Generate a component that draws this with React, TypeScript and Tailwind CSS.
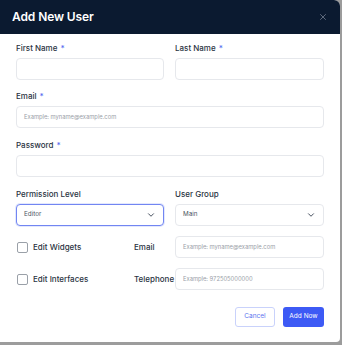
import { ChevronDown, X } from 'lucide-react'

function Label({ text, required }: { text: string; required?: boolean }) {
  return (
    <div className="h-[12px] text-[8px] leading-[12px] font-medium text-[#2a3342] mb-[4px]">
      {text}
      {required && <span className="text-[#4f6bf0] ml-[3px]">*</span>}
    </div>
  )
}

function Input({ placeholder }: { placeholder?: string }) {
  return (
    <div className="h-[22px] rounded-[4px] border border-[#e6e8ec] bg-white flex items-center px-[7px] text-[5.8px] text-[#9aa0a8]">
      {placeholder}
    </div>
  )
}

function Select({ value, active }: { value: string; active?: boolean }) {
  return (
    <div
      className={`h-[22px] rounded-[4px] border flex items-center justify-between px-[7px] text-[6.3px] text-[#4b5563] bg-white ${
        active ? 'border-[#7286f2] ring-1 ring-[#e3e8fd]' : 'border-[#e6e8ec]'
      }`}
    >
      <span>{value}</span>
      <ChevronDown size={10} strokeWidth={2.2} className="text-[#374151]" />
    </div>
  )
}

function CheckRow({ check, label, placeholder }: { check: string; label: string; placeholder: string }) {
  return (
    <div className="grid grid-cols-[148px_149px] gap-x-[11px] items-center">
      <div className="flex items-center">
        <div className="w-[118px] shrink-0 flex items-center pl-[1px]">
          <div className="w-[11px] h-[11px] rounded-[2px] border border-[#9aa0a8] bg-white" />
          <span className="ml-[5px] text-[8px] font-medium text-[#2a3342]">{check}</span>
        </div>
        <span className="text-[8px] font-medium text-[#2a3342] whitespace-nowrap">{label}</span>
      </div>
      <Input placeholder={placeholder} />
    </div>
  )
}

export default function App() {
  return (
    <div className="w-[342px] h-[345px] bg-[#9c9c9c]" style={{ fontFamily: 'Inter, "Noto Sans", sans-serif' }}>
      <div className="w-[340px] h-[342px] bg-white rounded-tr-[6px] rounded-br-[4px] overflow-hidden">
        <div className="h-[34px] bg-[#0b1a30] flex items-center justify-between pl-[12px] pr-[12px]">
          <span className="text-[12px] font-semibold text-white tracking-[-0.1px]">Add New User</span>
          <X size={10} strokeWidth={1.6} className="text-[#8a93a3]" />
        </div>
        <div className="px-[16px] pt-[8px]">
          <div className="grid grid-cols-[148px_149px] gap-x-[11px]">
            <div>
              <Label text="First Name" required />
              <Input />
            </div>
            <div>
              <Label text="Last Name" required />
              <Input />
            </div>
          </div>
          <div className="mt-[10px]">
            <Label text="Email" required />
            <Input placeholder="Example: myname@example.com" />
          </div>
          <div className="mt-[11px]">
            <Label text="Password" required />
            <Input />
          </div>
          <div className="mt-[11px] grid grid-cols-[148px_149px] gap-x-[11px]">
            <div>
              <Label text="Permission Level" />
              <Select value="Editor" active />
            </div>
            <div>
              <Label text="User Group" />
              <Select value="Main" />
            </div>
          </div>
          <div className="mt-[10px] flex flex-col gap-[10px]">
            <CheckRow check="Edit Widgets" label="Email" placeholder="Example: myname@example.com" />
            <CheckRow check="Edit Interfaces" label="Telephone" placeholder="Example: 972505000000" />
          </div>
          <div className="mt-[17px] flex justify-end gap-[8px]">
            <button className="w-[40px] h-[20px] rounded-[3px] border border-[#c9d2fb] text-[6.5px] text-[#5b73ee] bg-white">
              Cancel
            </button>
            <button className="w-[41px] h-[20px] rounded-[3px] bg-[#3d5af5] text-[6.5px] text-white">
              Add Now
            </button>
          </div>
        </div>
      </div>
    </div>
  )
}
